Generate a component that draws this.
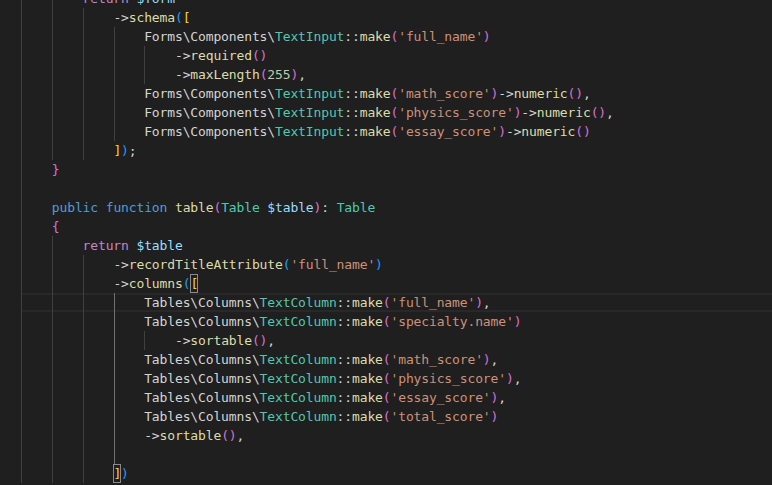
const C = {
  p: "text-[#d4d4d4]",
  f: "text-[#dcdcaa]",
  c: "text-[#4ec9b0]",
  s: "text-[#ce9178]",
  n: "text-[#b5cea8]",
  k: "text-[#569cd6]",
  r: "text-[#c586c0]",
  v: "text-[#9cdcfe]",
  b1: "text-[#ffd700]",
  b2: "text-[#da70d6]",
  b3: "text-[#179fff]",
};

const guideLeft = {
  0: "left-0",
  4: "left-[31px]",
  8: "left-[62px]",
  12: "left-[93px]",
  16: "left-[123px]",
};

const sp = (n) => ["p", " ".repeat(n)];

const formInput = (name, last) => [
  sp(16),
  ["p", "Forms\\Components\\"],
  ["c", "TextInput"],
  ["p", "::"],
  ["f", "make"],
  ["b2", "("],
  ["s", `'${name}'`],
  ["b2", ")"],
  ["p", "->"],
  ["f", "numeric"],
  ["b2", "()"],
  ...(last ? [] : [["p", ","]]),
];

const tableCol = (name, comma) => [
  sp(16),
  ["p", "Tables\\Columns\\"],
  ["c", "TextColumn"],
  ["p", "::"],
  ["f", "make"],
  ["b2", "("],
  ["s", `'${name}'`],
  ["b2", ")"],
  ...(comma ? [["p", ","]] : []),
];

const lines = [
  { g: [0, 4], t: [sp(8), ["r", "return"], ["p", " "], ["v", "$form"]] },
  { g: [0, 4, 8], t: [sp(12), ["p", "->"], ["f", "schema"], ["b3", "("], ["b1", "["]] },
  {
    g: [0, 4, 8, 12],
    t: [sp(16), ["p", "Forms\\Components\\"], ["c", "TextInput"], ["p", "::"], ["f", "make"], ["b2", "("], ["s", "'full_name'"], ["b2", ")"]],
  },
  { g: [0, 4, 8, 12, 16], t: [sp(20), ["p", "->"], ["f", "required"], ["b2", "()"]] },
  {
    g: [0, 4, 8, 12, 16],
    t: [sp(20), ["p", "->"], ["f", "maxLength"], ["b2", "("], ["n", "255"], ["b2", ")"], ["p", ","]],
  },
  { g: [0, 4, 8, 12], t: formInput("math_score") },
  { g: [0, 4, 8, 12], t: formInput("physics_score") },
  { g: [0, 4, 8, 12], t: formInput("essay_score", true) },
  { g: [0, 4, 8], t: [sp(12), ["b1", "]"], ["b3", ")"], ["p", ";"]] },
  { g: [0], t: [sp(4), ["b2", "}"]] },
  { g: [0], t: [] },
  {
    g: [0],
    t: [
      sp(4),
      ["k", "public"],
      ["p", " "],
      ["k", "function"],
      ["p", " "],
      ["f", "table"],
      ["b2", "("],
      ["c", "Table"],
      ["p", " "],
      ["v", "$table"],
      ["b2", ")"],
      ["p", ": "],
      ["c", "Table"],
    ],
  },
  { g: [0], t: [sp(4), ["b2", "{"]] },
  { g: [0, 4], t: [sp(8), ["r", "return"], ["p", " "], ["v", "$table"]] },
  {
    g: [0, 4, 8],
    t: [sp(12), ["p", "->"], ["f", "recordTitleAttribute"], ["b3", "("], ["s", "'full_name'"], ["b3", ")"]],
  },
  { g: [0, 4, 8], t: [sp(12), ["p", "->"], ["f", "columns"], ["b3", "("], ["b1", "[", "box"]] },
  { g: [0, 4, 8, "12a"], t: tableCol("full_name", true), current: true },
  { g: [0, 4, 8, "12a"], t: tableCol("specialty.name") },
  { g: [0, 4, 8, "12a", 16], t: [sp(20), ["p", "->"], ["f", "sortable"], ["b2", "()"], ["p", ","]] },
  { g: [0, 4, 8, "12a"], t: tableCol("math_score", true) },
  { g: [0, 4, 8, "12a"], t: tableCol("physics_score", true) },
  { g: [0, 4, 8, "12a"], t: tableCol("essay_score", true) },
  { g: [0, 4, 8, "12a"], t: tableCol("total_score") },
  { g: [0, 4, 8, "12a"], t: [sp(16), ["p", "->"], ["f", "sortable"], ["b2", "()"], ["p", ","]] },
  { g: [0, 4, 8, "12a"], t: [] },
  { g: [0, 4, 8], t: [sp(12), ["b1", "]", "box"], ["b3", ")"]] },
];

function Guide({ col }) {
  const active = col === "12a";
  const key = active ? 12 : col;
  return (
    <div
      className={`absolute top-0 bottom-0 w-px ${guideLeft[key]} ${
        active ? "bg-[#707070]" : "bg-[#404040]"
      }`}
    />
  );
}

function Line({ line }) {
  return (
    <div
      className={`relative h-[19px] leading-[19px] whitespace-pre ${
        line.current ? "shadow-[inset_0_2px_0_#282828,inset_0_-2px_0_#282828]" : ""
      }`}
    >
      {line.g.map((col) => (
        <Guide key={col} col={col} />
      ))}
      <span className="relative">
        {line.t.map(([type, text, box], i) =>
          box ? (
            <span
              key={i}
              className={`inline-block h-[19px] align-top shadow-[inset_0_0_0_1px_#8a8a8a] ${C[type]}`}
            >
              {text}
            </span>
          ) : (
            <span key={i} className={C[type]}>
              {text}
            </span>
          )
        )}
      </span>
    </div>
  );
}

export default function App() {
  return (
    <div className="w-[772px] h-[485px] overflow-hidden bg-[#1f1f1f]">
      <div
        className="-mt-[11px] ml-[21px] text-[13px] tracking-[-0.13px]"
        style={{ fontFamily: '"DejaVu Sans Mono", "Liberation Mono", monospace' }}
      >
        {lines.map((line, i) => (
          <Line key={i} line={line} />
        ))}
      </div>
    </div>
  );
}
